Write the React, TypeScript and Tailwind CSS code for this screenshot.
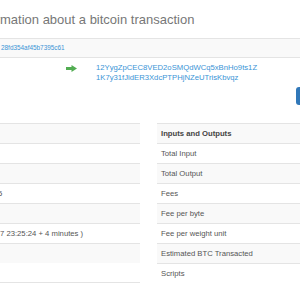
import React from "react";

const rightRows = [
  "Inputs and Outputs",
  "Total Input",
  "Total Output",
  "Fees",
  "Fee per byte",
  "Fee per weight unit",
  "Estimated BTC Transacted",
  "Scripts",
];

const leftRows = ["", "", "", "5", "", "7 23:25:24 + 4 minutes )", ""];

export default function App() {
  return (
    <div className="w-[300px] h-[300px] overflow-hidden bg-white font-['Liberation_Sans',Arial,sans-serif]">
      <div className="h-[38px] pt-[12px] overflow-hidden whitespace-nowrap">
        <h1 className="ml-[-26px] text-[13px] leading-[15px] text-[#777] font-normal">
          Information about a bitcoin transaction
        </h1>
      </div>
      <div className="h-[20px] border-y border-[#e4e4e4] bg-[#f9f9f9] flex items-center whitespace-nowrap overflow-hidden">
        <span className="pl-[1px] text-[6.4px] leading-[8px] text-[#3a94d6]">28fd354af45b7395c61</span>
      </div>
      <div className="flex pt-[5px] whitespace-nowrap">
        <div className="w-[66px] shrink-0" />
        <div className="w-[30px] shrink-0 h-[10px] flex items-center">
          <svg width="11" height="7" viewBox="0 0 11 7">
            <rect x="0" y="2" width="6" height="3" fill="#52ad52" />
            <polygon points="5.5,0 11,3.5 5.5,7" fill="#52ad52" />
          </svg>
        </div>
        <div className="flex flex-col text-[7.7px] leading-[10px] text-[#3a94d6]">
          <span>12YygZpCEC8VED2oSMQdWCq5xBnHo9ts1Z</span>
          <span>1K7y31fJidER3XdcPTPHjNZeUTrisKbvqz</span>
        </div>
      </div>
      <div className="flex mt-[4px] pl-[296px]">
        <div className="w-[60px] h-[18px] shrink-0 rounded-[3px] bg-[#3178b9]" />
      </div>
      <div className="flex mt-[18px] gap-[17px] text-[7.7px] whitespace-nowrap">
        <div className="w-[140px] shrink-0 flex flex-col border-b border-[#e4e4e4]">
          {leftRows.map((t, i) => (
            <div
              key={i}
              className={`h-[20px] border-t border-[#e4e4e4] flex items-center text-[#555] ${
                i % 2 === 0 ? "bg-[#f9f9f9]" : "bg-white"
              }`}
            >
              {t === "5" ? <span className="ml-[-2px]">5</span> : <span>{t}</span>}
            </div>
          ))}
        </div>
        <div className="flex-1 flex flex-col">
          {rightRows.map((t, i) => (
            <div
              key={i}
              className={`h-[20px] border-t border-[#e4e4e4] flex items-center pl-[4px] ${
                i % 2 === 0 ? "bg-[#f9f9f9]" : "bg-white"
              } ${i === 0 ? "font-bold text-[#444]" : "text-[#555]"}`}
            >
              {t}
            </div>
          ))}
        </div>
      </div>
    </div>
  );
}
